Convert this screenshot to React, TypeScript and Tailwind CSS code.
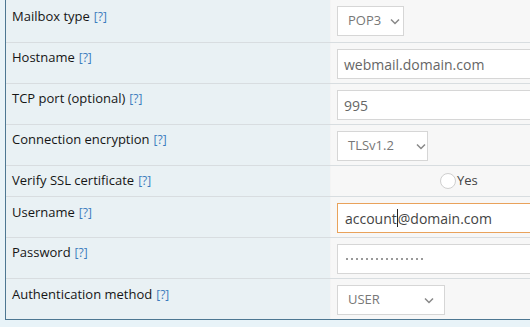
import React from "react";

const Help = () => <span className="text-[12px] text-[#3b7cbd] ml-[4px]">[?]</span>;

const Chevron = () => (
  <svg width="10" height="7" viewBox="0 0 10 7" className="shrink-0">
    <path d="M1 1.5 L5 5.5 L9 1.5" fill="none" stroke="#888" strokeWidth="1.5" />
  </svg>
);

function Row({ label, h, pt, children }: { label: string; h: string; pt: string; children: React.ReactNode }) {
  return (
    <div className={`flex ${h} border-t border-[#d8dde0]`}>
      <div className={`w-[325px] bg-[#e9f1f4] pl-[6px] ${pt} text-[13px] leading-[18px] text-[#161616] border-r border-[#f4f4f4]`}>
        {label}
        <Help />
      </div>
      <div className="flex-1 bg-[#f7f7f7] pl-[6px] pt-[6px]">{children}</div>
    </div>
  );
}

const dots = Array.from({ length: 16 });

export default function App() {
  return (
    <div className="w-[530px] h-[327px] overflow-hidden bg-[#e8f3f8] font-['Open_Sans',sans-serif]">
      <div className="ml-[5px] w-[640px] border-l border-b border-[#4d7792] -mt-px">
        <Row label="Mailbox type" h="h-[43px]" pt="pt-[7px]">
          <div className="w-[67px] h-[30px] border border-[#d6d6d6] bg-white flex items-center pl-[10px] gap-[9px] text-[13px] text-[#777]">
            <span>POP3</span>
            <Chevron />
          </div>
        </Row>
        <Row label="Hostname" h="h-[41px]" pt="pt-[5px]">
          <div className="w-[300px] h-[30px] border border-[#d6d6d6] bg-white flex items-center pl-[6px] text-[14px] text-[#666]">
            webmail.domain.com
          </div>
        </Row>
        <Row label="TCP port (optional)" h="h-[41px]" pt="pt-[5px]">
          <div className="w-[300px] h-[30px] border border-[#d6d6d6] bg-white flex items-center pl-[6px] text-[14px] text-[#666]">
            995
          </div>
        </Row>
        <Row label="Connection encryption" h="h-[41px]" pt="pt-[5px]">
          <div className="w-[91px] h-[30px] border border-[#d6d6d6] bg-white flex items-center pl-[10px] gap-[22px] text-[13px] text-[#777]">
            <span>TLSv1.2</span>
            <Chevron />
          </div>
        </Row>
        <div className="flex h-[31px] border-t border-[#d8dde0]">
          <div className="w-[325px] bg-[#e9f1f4] pl-[6px] pt-[5px] text-[13px] leading-[18px] text-[#161616] border-r border-[#f4f4f4]">
            Verify SSL certificate
            <Help />
          </div>
          <div className="flex-1 bg-[#f7f7f7] pl-[109px] flex items-center text-[13px] text-[#444]">
            <span className="w-[16px] h-[16px] rounded-full border border-[#cfcfcf] bg-white mr-[1px]" />
            <span>Yes</span>
          </div>
        </div>
        <Row label="Username" h="h-[41px]" pt="pt-[6px]">
          <div className="w-[300px] h-[30px] border border-[#e9a25b] bg-white flex items-center pl-[7px] text-[14px] text-[#444]">
            account<span className="inline-block w-px h-[18px] bg-[#222]" />@domain.com
          </div>
        </Row>
        <Row label="Password" h="h-[41px]" pt="pt-[5px]">
          <div className="w-[300px] h-[30px] border border-[#d6d6d6] bg-white flex items-center pl-[8px] gap-[3px]">
            {dots.map((_, i) => (
              <span key={i} className="w-[2px] h-[2px] rounded-full bg-[#777]" />
            ))}
          </div>
        </Row>
        <Row label="Authentication method" h="h-[41px]" pt="pt-[6px]">
          <div className="w-[108px] h-[30px] border border-[#d6d6d6] bg-white flex items-center pl-[10px] pr-[10px] justify-between text-[13px] text-[#777]">
            <span>USER</span>
            <Chevron />
          </div>
        </Row>
      </div>
    </div>
  );
}
